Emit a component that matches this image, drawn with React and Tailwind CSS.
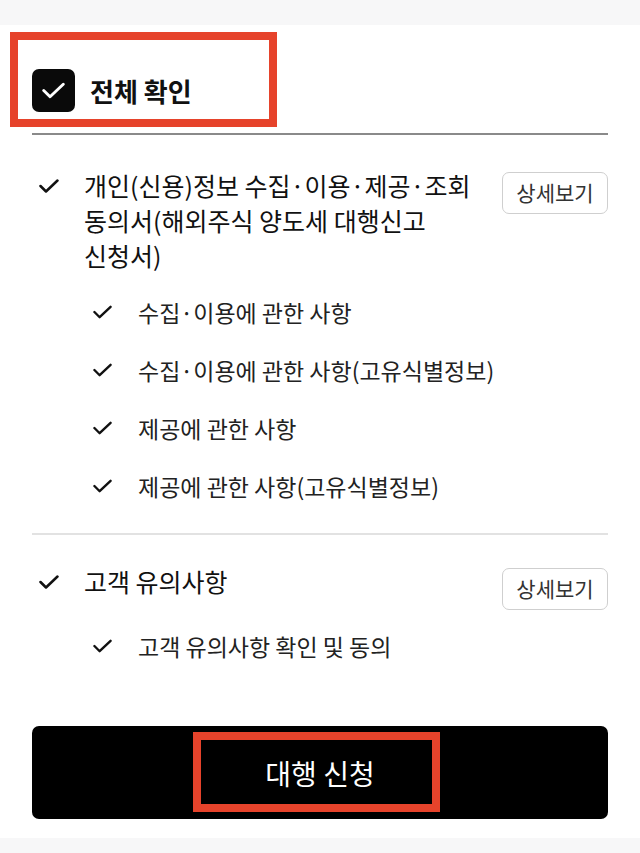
import React, { useState } from 'react';

const FONT = { fontFamily: '"Noto Sans CJK KR", "Noto Sans", sans-serif' };

const agreements = [
    {
        title: '개인(신용)정보 수집·이용·제공·조회 동의서(해외주식 양도세 대행신고 신청서)',
        items: [
            '수집·이용에 관한 사항',
            '수집·이용에 관한 사항(고유식별정보)',
            '제공에 관한 사항',
            '제공에 관한 사항(고유식별정보)',
        ],
    },
    {
        title: '고객 유의사항',
        items: ['고객 유의사항 확인 및 동의'],
    },
];

function Check({ className }) {
    return (
        <svg viewBox="0 0 20 14" className={className} fill="none" stroke="currentColor" strokeWidth="2.5" strokeLinecap="round" strokeLinejoin="round">
            <polyline points="1.5,7 7,12.5 18.5,1.5" />
        </svg>
    );
}

function Highlight({ className }) {
    return <div className={'absolute border-[8px] border-[#e6432b] pointer-events-none ' + className}></div>;
}

function AgreementGroup({ group, subGap }) {
    return (
        <div>
            <div className="flex flex-row items-start justify-between">
                <div className="flex flex-row items-start">
                    <div className="w-[52px] h-[35px] flex items-center pl-[7px]">
                        <Check className="w-[20px] h-[14px] text-[#111]" />
                    </div>
                    <div className="w-[400px] text-[25px] leading-[35px] text-[#111] break-keep">{group.title}</div>
                </div>
                <button className="mt-[4px] w-[106px] h-[42px] border-[1.5px] border-[#cfcfcf] rounded-[7px] text-[21px] text-[#333] bg-white">상세보기</button>
            </div>
            <div className={'flex flex-col gap-[28px] ' + subGap}>
                {group.items.map((item) => (
                    <div key={item} className="flex flex-row items-center pl-[61px] h-[30px]">
                        <Check className="w-[19px] h-[14px] text-[#111]" />
                        <span className="ml-[26px] text-[23px] text-[#222]">{item}</span>
                    </div>
                ))}
            </div>
        </div>
    );
}

export default function App() {
    const [checked] = useState(true);

    return (
        <div className="min-h-[853px] bg-[#f7f7f8] pt-[25px] pb-[15px]" style={FONT}>
            <div className="bg-white px-[32px]">
                <div className="relative pt-[44px] pb-[21px]">
                    <Highlight className="left-[-22px] top-[7px] w-[267px] h-[95px]" />
                    <div className="flex flex-row items-center gap-[15px]">
                        <div className="w-[43px] h-[43px] rounded-[7px] bg-[#0a0a0a] flex items-center justify-center">
                            {checked && <Check className="w-[23px] h-[17px] text-white" />}
                        </div>
                        <span className="text-[26px] font-bold text-[#111]">전체 확인</span>
                    </div>
                </div>
                <div className="h-[2px] bg-[#8a8a8a]"></div>

                <div className="pt-[33px] pb-[32px]">
                    <AgreementGroup group={agreements[0]} subGap="mt-[24px]" />
                </div>
                <div className="h-[2px] bg-[#e2e2e2]"></div>
                <div className="pt-[29px]">
                    <AgreementGroup group={agreements[1]} subGap="mt-[21px]" />
                </div>

                <div className="pt-[65px] pb-[19px]">
                    <button className="relative w-full h-[93px] rounded-[7px] bg-black text-white text-[28px] font-normal">
                        <Highlight className="left-[161px] top-[6px] w-[247px] h-[80px]" />
                        대행 신청
                    </button>
                </div>
            </div>
        </div>
    );
}
